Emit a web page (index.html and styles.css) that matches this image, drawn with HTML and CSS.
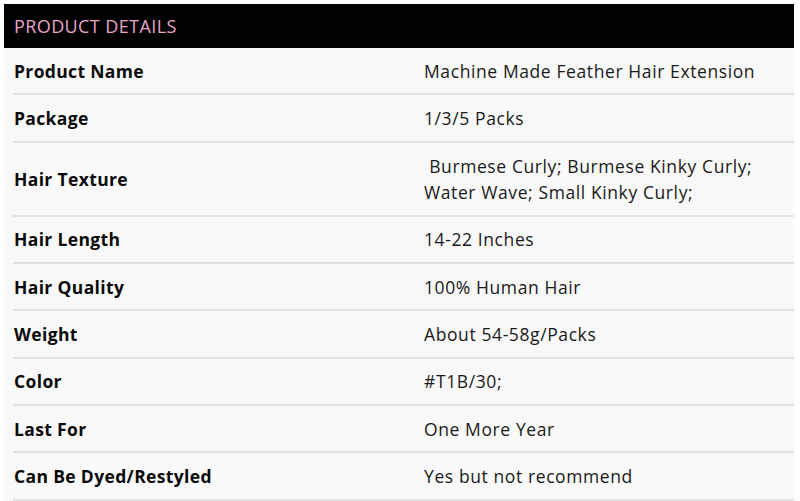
FILE: index.html
```html
<!DOCTYPE html>
<html>
<head>
<meta charset="utf-8">
<link rel="stylesheet" href="styles.css">
</head>
<body>
<div class="details">
  <div class="head">PRODUCT DETAILS</div>
  <div class="rows">
    <div class="row"><div class="k">Product Name</div><div class="v">Machine Made Feather Hair Extension</div></div>
    <div class="row"><div class="k">Package</div><div class="v">1/3/5 Packs</div></div>
    <div class="row tall"><div class="k">Hair Texture</div><div class="v">&nbsp;Burmese Curly; Burmese Kinky Curly;<br>Water Wave; Small Kinky Curly;</div></div>
    <div class="row"><div class="k">Hair Length</div><div class="v">14-22 Inches</div></div>
    <div class="row"><div class="k">Hair Quality</div><div class="v">100% Human Hair</div></div>
    <div class="row"><div class="k">Weight</div><div class="v">About 54-58g/Packs</div></div>
    <div class="row"><div class="k">Color</div><div class="v">#T1B/30;</div></div>
    <div class="row"><div class="k">Last For</div><div class="v">One More Year</div></div>
    <div class="row"><div class="k">Can Be Dyed/Restyled</div><div class="v">Yes but not recommend</div></div>
  </div>
</div>
</body>
</html>
```
FILE: styles.css
```css
html, body { margin: 0; padding: 0; background: #fff; }
body { padding: 4px 6px 0 4px; font-family: "Open Sans", sans-serif; color: #111; }
.details { background: #f9f9f9; width: 790px; }
.head {
  background: #000;
  color: #e7a6c8;
  height: 44px;
  display: flex;
  align-items: center;
  padding-left: 10px;
  font-size: 18px;
  letter-spacing: 0.4px;
}
.rows { padding-left: 9px; }
.row {
  display: grid;
  grid-template-columns: 411px 1fr;
  border-bottom: 2px solid #e2e2e2;
  min-height: 45.33px;
  align-items: center;
  font-size: 17.5px;
  line-height: 26px;
}
.row.tall { min-height: 72px; }
.k { font-weight: 700; padding-left: 1px; color: #0a0a0a; letter-spacing: 0.35px; }
.v { color: #1a1a1a; letter-spacing: 0.6px; }
```
